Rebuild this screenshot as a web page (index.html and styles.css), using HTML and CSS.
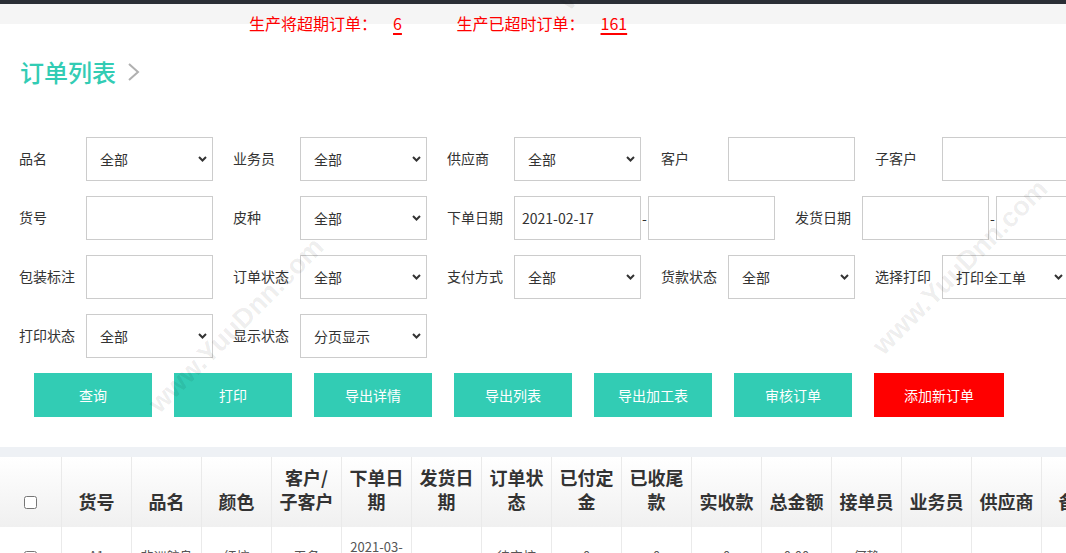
FILE: index.html
```html
<!DOCTYPE html>
<html lang="zh-CN">
<head>
<meta charset="utf-8">
<title>订单列表</title>
<link rel="stylesheet" href="styles.css">
</head>
<body>
<div class="topbar"></div>
<div class="notice">
  <span class="warn">生产将超期订单：<a class="num">6</a></span>
  <span class="warn warn2">生产已超时订单：<a class="num">161</a></span>
</div>

<div class="title-row">
  <h1 class="title">订单列表</h1>
  <svg class="title-chev" width="14" height="20" viewBox="0 0 14 20"><polyline points="2,2 11,10 2,18" fill="none" stroke="#b0b0b0" stroke-width="2"/></svg>
</div>

<div class="filters">
  <div class="frow">
    <div class="field"><span class="lbl">品名</span><div class="sel"><select><option>全部</option></select><svg class="arr" width="9" height="6" viewBox="0 0 9 6"><polyline points="1,1 4.5,4.5 8,1" fill="none" stroke="#333" stroke-width="2"/></svg></div></div>
    <div class="field"><span class="lbl">业务员</span><div class="sel"><select><option>全部</option></select><svg class="arr" width="9" height="6" viewBox="0 0 9 6"><polyline points="1,1 4.5,4.5 8,1" fill="none" stroke="#333" stroke-width="2"/></svg></div></div>
    <div class="field"><span class="lbl">供应商</span><div class="sel"><select><option>全部</option></select><svg class="arr" width="9" height="6" viewBox="0 0 9 6"><polyline points="1,1 4.5,4.5 8,1" fill="none" stroke="#333" stroke-width="2"/></svg></div></div>
    <div class="field"><span class="lbl">客户</span><input class="inp" type="text"></div>
    <div class="field"><span class="lbl">子客户</span><input class="inp" type="text"></div>
  </div>
  <div class="frow">
    <div class="field"><span class="lbl">货号</span><input class="inp" type="text"></div>
    <div class="field"><span class="lbl">皮种</span><div class="sel"><select><option>全部</option></select><svg class="arr" width="9" height="6" viewBox="0 0 9 6"><polyline points="1,1 4.5,4.5 8,1" fill="none" stroke="#333" stroke-width="2"/></svg></div></div>
    <div class="field"><span class="lbl">下单日期</span><input class="inp" type="text" value="2021-02-17"><span class="dash">-</span><input class="inp" type="text"></div>
    <div class="field"><span class="lbl">发货日期</span><input class="inp" type="text"><span class="dash">-</span><input class="inp" type="text"></div>
  </div>
  <div class="frow">
    <div class="field"><span class="lbl">包装标注</span><input class="inp" type="text"></div>
    <div class="field"><span class="lbl">订单状态</span><div class="sel"><select><option>全部</option></select><svg class="arr" width="9" height="6" viewBox="0 0 9 6"><polyline points="1,1 4.5,4.5 8,1" fill="none" stroke="#333" stroke-width="2"/></svg></div></div>
    <div class="field"><span class="lbl">支付方式</span><div class="sel"><select><option>全部</option></select><svg class="arr" width="9" height="6" viewBox="0 0 9 6"><polyline points="1,1 4.5,4.5 8,1" fill="none" stroke="#333" stroke-width="2"/></svg></div></div>
    <div class="field"><span class="lbl">货款状态</span><div class="sel"><select><option>全部</option></select><svg class="arr" width="9" height="6" viewBox="0 0 9 6"><polyline points="1,1 4.5,4.5 8,1" fill="none" stroke="#333" stroke-width="2"/></svg></div></div>
    <div class="field"><span class="lbl">选择打印</span><div class="sel"><select><option>打印全工单</option></select><svg class="arr" width="9" height="6" viewBox="0 0 9 6"><polyline points="1,1 4.5,4.5 8,1" fill="none" stroke="#333" stroke-width="2"/></svg></div></div>
  </div>
  <div class="frow">
    <div class="field"><span class="lbl">打印状态</span><div class="sel"><select><option>全部</option></select><svg class="arr" width="9" height="6" viewBox="0 0 9 6"><polyline points="1,1 4.5,4.5 8,1" fill="none" stroke="#333" stroke-width="2"/></svg></div></div>
    <div class="field"><span class="lbl">显示状态</span><div class="sel"><select><option>分页显示</option></select><svg class="arr" width="9" height="6" viewBox="0 0 9 6"><polyline points="1,1 4.5,4.5 8,1" fill="none" stroke="#333" stroke-width="2"/></svg></div></div>
  </div>
</div>

<div class="actions">
  <button class="btn">查询</button>
  <button class="btn">打印</button>
  <button class="btn">导出详情</button>
  <button class="btn">导出列表</button>
  <button class="btn">导出加工表</button>
  <button class="btn">审核订单</button>
  <button class="btn btn-red">添加新订单</button>
</div>

<div class="sep"></div>

<table class="grid">
  <colgroup>
    <col class="c-chk">
    <col class="c-col"><col class="c-col"><col class="c-col"><col class="c-col"><col class="c-col"><col class="c-col"><col class="c-col"><col class="c-col"><col class="c-col"><col class="c-col"><col class="c-col"><col class="c-col"><col class="c-col"><col class="c-col"><col class="c-col"><col class="c-col">
  </colgroup>
  <thead>
    <tr>
      <th class="chk"><input type="checkbox" class="cb"></th>
      <th>货号</th><th>品名</th><th>颜色</th><th>客户/子客户</th><th>下单日期</th><th>发货日期</th><th>订单状态</th><th>已付定金</th><th>已收尾款</th><th>实收款</th><th>总金额</th><th>接单员</th><th>业务员</th><th>供应商</th><th>备注</th><th>操作</th>
    </tr>
  </thead>
  <tbody>
    <tr>
      <td class="chk"><input type="checkbox" class="cb"></td>
      <td>A1</td><td>非洲鸵鸟</td><td>红棕</td><td>无名</td><td>2021-03-05</td><td></td><td>待审核</td><td>0</td><td>0</td><td>0</td><td>0.00</td><td>何静</td><td></td><td></td><td></td><td></td>
    </tr>
  </tbody>
</table>

<span class="wm wm1">www.YuuDnn.com</span>
<span class="wm wm2">www.YuuDnn.com</span>
<span class="wm wm3">www.YuuDnn.com</span>
</body>
</html>
```

FILE: styles.css
```css
* { box-sizing: border-box; }
html, body { margin: 0; padding: 0; }
body {
  width: 1066px;
  height: 553px;
  overflow: hidden;
  position: relative;
  background: #fff;
  color: #333;
  font-family: "Noto Sans CJK SC", "Microsoft YaHei", sans-serif;
}

.topbar { height: 4px; background: #2a2e35; }

.notice {
  height: 31px;
  padding: 7px 0 0 249px;
  background: linear-gradient(#f5f5f5 0, #f5f5f5 20px, #fff 20px);
  font-size: 16px;
  line-height: 24px;
  color: #f00;
  white-space: nowrap;
}
.warn2 { margin-left: 51px; }
.num {
  color: #f00;
  margin-left: 16px;
  text-decoration: underline;
  text-decoration-thickness: 2px;
  text-underline-offset: 3px;
}

.title-row {
  display: flex;
  align-items: center;
  height: 34px;
  margin-top: 20px;
  padding-left: 20px;
}
.title {
  margin: 0;
  font-size: 24px;
  line-height: 34px;
  font-weight: 500;
  color: #32ccb4;
}
.title-chev { margin-left: 11px; }

.filters {
  margin-top: 48px;
  padding-left: 19px;
  display: flex;
  flex-direction: column;
  gap: 15px;
}
.frow { display: flex; gap: 20px; white-space: nowrap; }
.field { display: flex; align-items: center; flex: none; }
.lbl {
  width: 67px;
  flex: none;
  font-size: 14px;
  line-height: 42px;
  padding-bottom: 2px;
  color: #333;
}
.inp {
  width: 127px;
  height: 44px;
  flex: none;
  border: 1px solid #ccc;
  padding: 0 7px;
  font-family: inherit;
  font-size: 14px;
  color: #333;
  background: #fff;
  outline: none;
}
.dash {
  width: 7px;
  flex: none;
  text-align: center;
  font-size: 14px;
  color: #333;
}
.sel {
  position: relative;
  width: 127px;
  height: 44px;
  flex: none;
}
.sel select {
  -webkit-appearance: none;
  appearance: none;
  width: 100%;
  height: 100%;
  border: 1px solid #ccc;
  border-radius: 0;
  background: #fff;
  padding: 0 22px 0 13px;
  font-family: inherit;
  font-size: 14px;
  color: #333;
  outline: none;
}
.sel .arr {
  position: absolute;
  right: 6px;
  top: 50%;
  margin-top: -3px;
  pointer-events: none;
}

.actions {
  display: flex;
  gap: 22px;
  margin-top: 15px;
  padding-left: 34px;
}
.btn {
  width: 118px;
  height: 44px;
  flex: none;
  border: 0;
  border-radius: 0;
  background: #32ccb4;
  color: #fff;
  font-family: inherit;
  font-size: 14px;
  padding: 0;
}
.btn-red { width: 130px; background: #f00; }

.sep { margin-top: 30px; height: 10px; background: #eef1f5; }

.grid {
  table-layout: fixed;
  width: 1181px;
  border-collapse: separate;
  border-spacing: 0;
}
.c-chk { width: 61px; }
.c-col { width: 70px; }
.grid th {
  height: 70px;
  padding: 0 7px 14px;
  vertical-align: bottom;
  text-align: center;
  font-size: 18px;
  line-height: 24px;
  font-weight: bold;
  color: #333;
  background: linear-gradient(#fff, #f0f0f0);
  border-left: 1px solid #eaeaea;
}
.grid td {
  height: 58px;
  padding: 0 7px;
  text-align: center;
  vertical-align: middle;
  font-size: 13px;
  line-height: 18px;
  color: #555;
  border-left: 1px solid #eaeaea;
}
.grid .chk { border-left: 0; padding: 0 0 16px; }
.grid td.chk { padding: 0; }
.cb { width: 13px; height: 13px; margin: 0; vertical-align: middle; }

.wm {
  position: absolute;
  font-family: "Liberation Sans", Arial, sans-serif;
  font-weight: bold;
  font-size: 27px;
  line-height: 30px;
  color: rgba(0, 0, 0, 0.08);
  white-space: nowrap;
  transform: translate(-50%, -50%) rotate(-45deg);
  pointer-events: none;
}
.wm1 { left: 236px; top: 325px; }
.wm2 { left: 960px; top: 267px; }
.wm3 { left: 646px; top: -78px; }
```
